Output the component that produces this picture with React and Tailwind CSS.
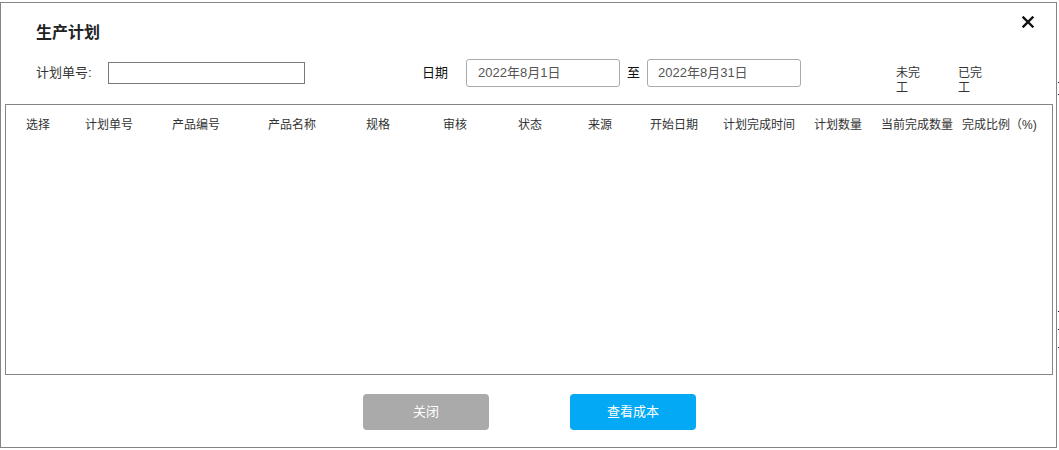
import React from "react";

const cols = [
  "选择",
  "计划单号",
  "产品编号",
  "产品名称",
  "规格",
  "审核",
  "状态",
  "来源",
  "开始日期",
  "计划完成时间",
  "计划数量",
  "当前完成数量",
  "完成比例（%)",
];

const colW = [
  "w-[64px]",
  "w-[78px]",
  "w-[96px]",
  "w-[96px]",
  "w-[76px]",
  "w-[78px]",
  "w-[72px]",
  "w-[68px]",
  "w-[80px]",
  "w-[90px]",
  "w-[68px]",
  "w-[90px]",
  "w-[74px]",
];

export default function App() {
  const font = { fontFamily: '"Liberation Sans", "Noto Sans CJK SC", sans-serif' };
  return (
    <div className="w-[1059px] h-[450px] bg-white relative overflow-hidden" style={font}>
      <div className="mt-[2px] w-[1057px] h-[446px] border border-[#858585] relative flex flex-col">
        <button className="absolute top-[12px] right-[21px] w-[14px] h-[14px] flex items-center justify-center">
          <svg width="12" height="12" viewBox="0 0 12 12">
            <path d="M1.5 1.5 L10.5 10.5 M10.5 1.5 L1.5 10.5" stroke="#111" strokeWidth="2.4" strokeLinecap="square" />
          </svg>
        </button>
        <div className="pt-[20px] pl-[35px] text-[16px] leading-[20px] font-bold text-[#222]">生产计划</div>
        <div className="mt-[16px] h-[28px] flex items-center text-[13px] text-[#333]">
          <span className="ml-[35px] w-[72px] leading-[16px]">计划单号:</span>
          <div className="w-[197px] h-[22px] border border-[#7a7a7a]"></div>
          <span className="ml-[117px] w-[26px] leading-[16px] text-[#111]">日期</span>
          <div className="ml-[18px] w-[154px] h-[28px] rounded-[3px] border border-[#aaaaaa] flex items-center pl-[11px] text-[#555]">
            2022年8月1日
          </div>
          <span className="ml-[7px] w-[13px] leading-[16px] text-[#111]">至</span>
          <div className="ml-[7px] w-[154px] h-[28px] rounded-[3px] border border-[#aaaaaa] flex items-center pl-[10px] text-[#555]">
            2022年8月31日
          </div>
          <div className="ml-[95px] self-start mt-[7px] w-[26px] text-[12px] leading-[15px] text-[#333]">未完工</div>
          <div className="ml-[36px] self-start mt-[7px] w-[26px] text-[12px] leading-[15px] text-[#333]">已完工</div>
        </div>
        <div className="mt-[17px] ml-[4px] w-[1048px] h-[271px] border border-[#858585]">
          <div className="flex pt-[13px] text-[12px] leading-[14px] text-[#333]">
            {cols.map((t, i) => (
              <div key={i} className={`${colW[i]} text-center whitespace-nowrap`}>
                {t}
              </div>
            ))}
          </div>
        </div>
        <div className="mt-[19px] flex">
          <button className="ml-[362px] w-[126px] h-[36px] rounded-[4px] bg-[#aaaaaa] text-white text-[13px]">关闭</button>
          <button className="ml-[81px] w-[126px] h-[36px] rounded-[4px] bg-[#03a9f4] text-white text-[13px]">查看成本</button>
        </div>
      </div>
      <div className="absolute left-[1058px] top-[82px] w-[1px] h-[1px] bg-[#223]"></div>
      <div className="absolute left-[1058px] top-[94px] w-[1px] h-[1px] bg-[#223]"></div>
      <div className="absolute left-[1058px] top-[311px] w-[1px] h-[1px] bg-[#223]"></div>
      <div className="absolute left-[1058px] top-[329px] w-[1px] h-[1px] bg-[#223]"></div>
      <div className="absolute left-[1058px] top-[347px] w-[1px] h-[1px] bg-[#223]"></div>
    </div>
  );
}
